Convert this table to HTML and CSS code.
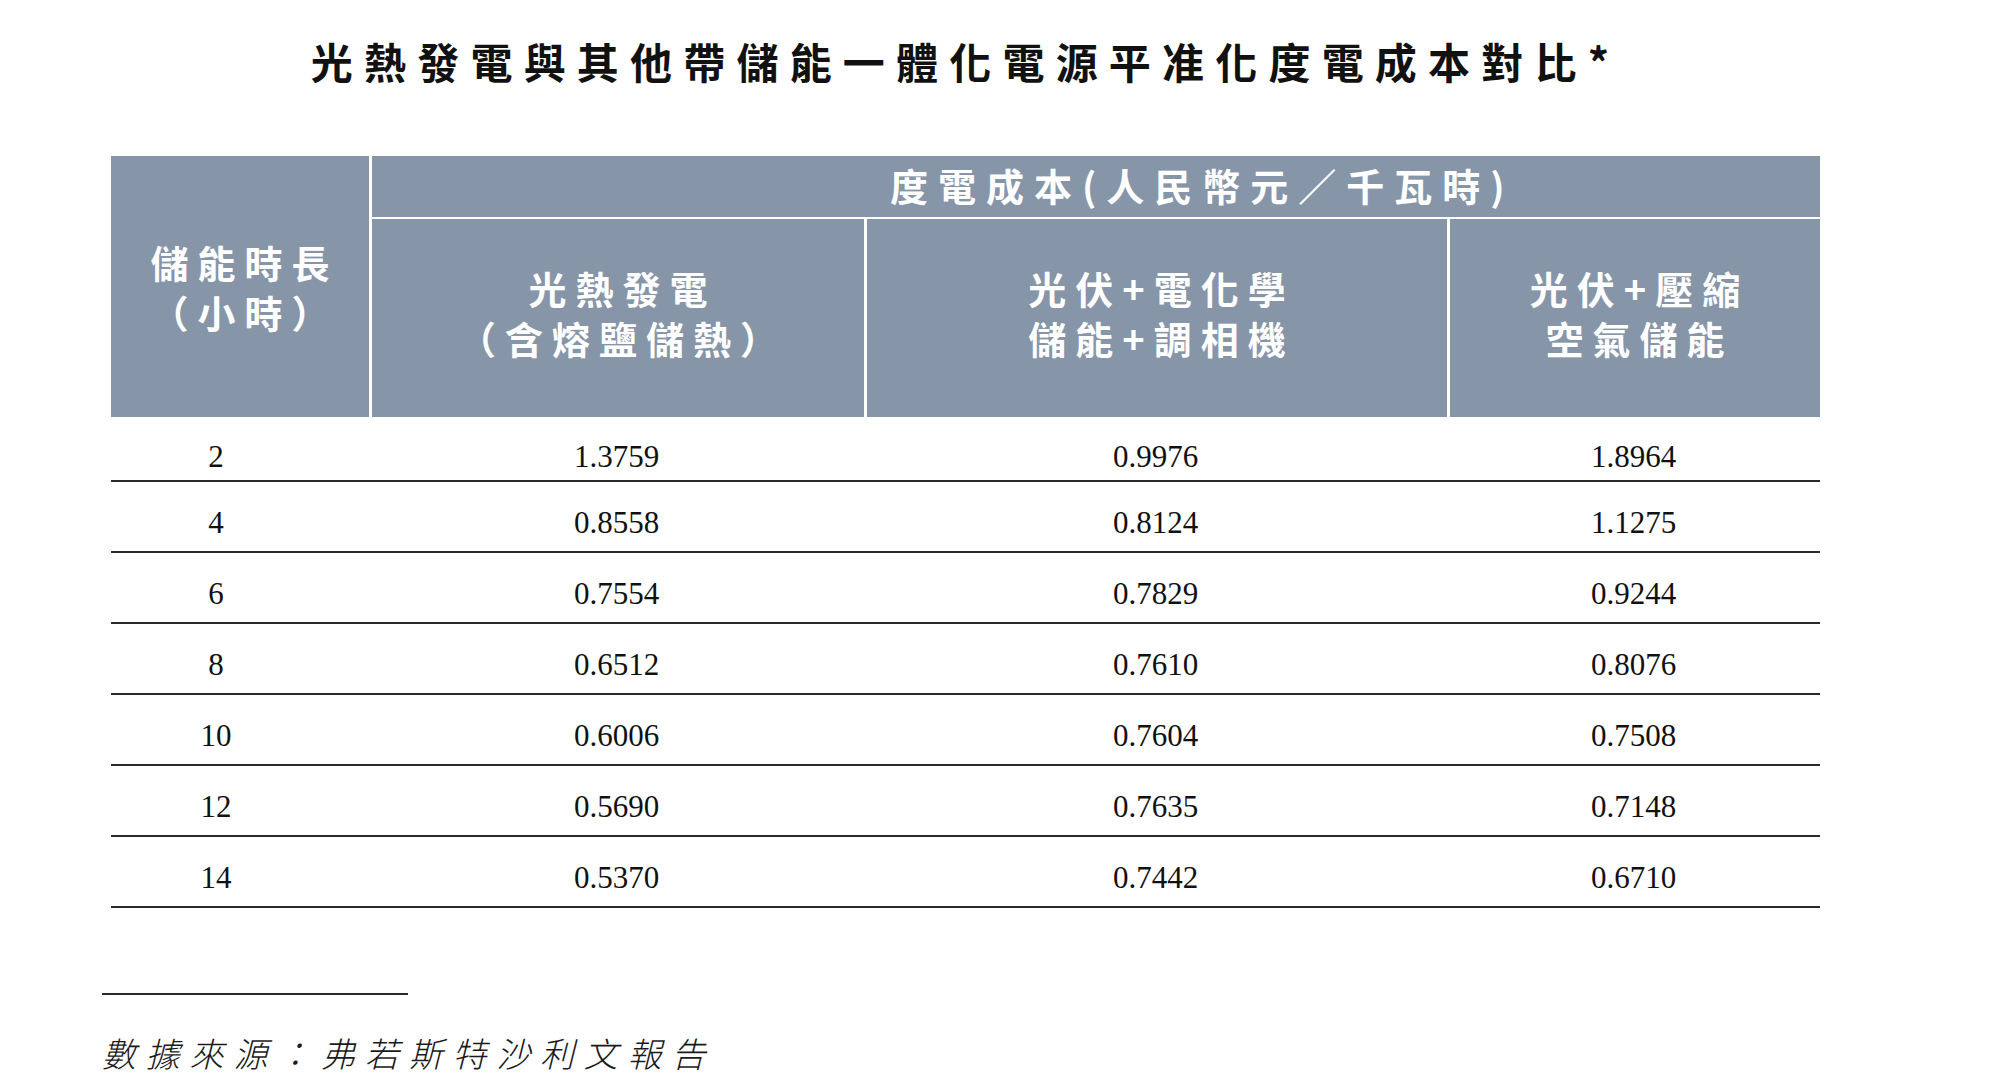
FILE: index.html
```html
<!DOCTYPE html>
<html lang="zh-Hant">
<head>
<meta charset="utf-8">
<title>光熱發電與其他帶儲能一體化電源平准化度電成本對比</title>
<link rel="stylesheet" href="styles.css">
</head>
<body>
<main class="page">
  <h1 class="title">光熱發電與其他帶儲能一體化電源平准化度電成本對比*</h1>
  <table class="cost-table">
    <colgroup>
      <col class="c1"><col class="c2"><col class="c3"><col class="c4">
    </colgroup>
    <thead>
      <tr class="head-top">
        <th class="hours" rowspan="2">儲能時長<br>（小時）</th>
        <th class="group" colspan="3"><span class="group-label">度電成本(人民幣元／千瓦時)</span></th>
      </tr>
      <tr class="head-sub">
        <th class="sub">光熱發電<br><span class="paren">（含熔鹽儲熱）</span></th>
        <th class="sub">光伏+電化學<br>儲能+調相機</th>
        <th class="sub">光伏+壓縮<br>空氣儲能</th>
      </tr>
    </thead>
    <tbody>
      <tr class="first"><td class="h">2</td><td>1.3759</td><td>0.9976</td><td>1.8964</td></tr>
      <tr><td class="h">4</td><td>0.8558</td><td>0.8124</td><td>1.1275</td></tr>
      <tr><td class="h">6</td><td>0.7554</td><td>0.7829</td><td>0.9244</td></tr>
      <tr><td class="h">8</td><td>0.6512</td><td>0.7610</td><td>0.8076</td></tr>
      <tr><td class="h">10</td><td>0.6006</td><td>0.7604</td><td>0.7508</td></tr>
      <tr><td class="h">12</td><td>0.5690</td><td>0.7635</td><td>0.7148</td></tr>
      <tr><td class="h">14</td><td>0.5370</td><td>0.7442</td><td>0.6710</td></tr>
    </tbody>
  </table>
  <footer class="source">
    <div class="rule"></div>
    <p class="source-text">數據來源：弗若斯特沙利文報告</p>
  </footer>
</main>
</body>
</html>
```

FILE: styles.css
```css
html, body {
  margin: 0;
  padding: 0;
  background: #ffffff;
}

.page {
  padding-left: 102px;
  width: 1800px;
  font-family: "Noto Sans CJK TC", "Noto Sans CJK SC", sans-serif;
  color: #111111;
}

.title {
  margin: 0 0 0 9px;
  padding-top: 33px;
  width: 1709px;
  text-align: center;
  font-size: 42px;
  line-height: 56px;
  font-weight: 700;
  letter-spacing: 11.2px;
  color: #111111;
}

.cost-table {
  margin: 67px 0 0 9px;
  width: 1709px;
  table-layout: fixed;
  border-collapse: separate;
  border-spacing: 0;
}

.c1 { width: 258px; }
.c2 { width: 495px; }
.c3 { width: 583px; }
.c4 { width: 373px; }

.cost-table th {
  background: #8795a9;
  color: #ffffff;
  font-family: "Noto Sans CJK TC", "Noto Sans CJK SC", sans-serif;
  font-weight: 700;
  font-size: 38px;
  line-height: 50px;
  letter-spacing: 9px;
  padding: 0;
  text-align: center;
  vertical-align: middle;
}

.head-top { height: 63px; }
.head-sub { height: 198px; }

.cost-table th.hours {
  padding-left: 9px;
  padding-top: 0;
}

.cost-table th.group {
  border-left: 3px solid #ffffff;
  border-bottom: 2px solid #ffffff;
  text-align: left;
  padding-left: 518px;
  padding-bottom: 3px;
  line-height: 58px;
  letter-spacing: 10px;
}

.cost-table th.sub {
  border-left: 3px solid #ffffff;
  padding-left: 9px;
  padding-bottom: 11px;
}

.cost-table td {
  font-family: "Liberation Serif", "Times New Roman", serif;
  font-size: 31px;
  color: #111111;
  text-align: center;
  vertical-align: middle;
  padding: 13px 0 0 0;
  border-bottom: 2px solid #2a2a2a;
}

.cost-table tbody tr { height: 71px; }
.cost-table tbody tr.first { height: 65px; }
.cost-table tbody tr.first td { padding-top: 16px; }

.cost-table td.h {
  padding-right: 48px;
}

.source {
  margin-top: 85px;
}

.rule {
  width: 306px;
  height: 2px;
  background: #2a2a2a;
}

.source-text {
  margin: 34px 0 0 0;
  font-family: "Noto Sans CJK TC", "Noto Sans CJK SC", sans-serif;
  font-weight: 300;
  font-style: italic;
  font-size: 34px;
  line-height: 48px;
  letter-spacing: 9.8px;
  color: #1a1a1a;
}
```
